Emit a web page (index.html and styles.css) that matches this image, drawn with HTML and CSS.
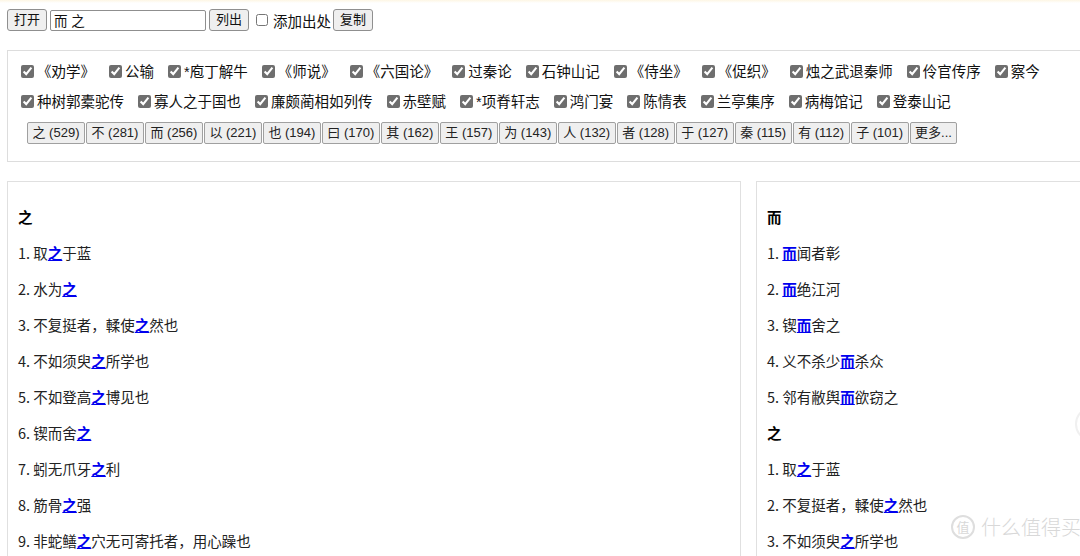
FILE: index.html
```html
<!DOCTYPE html>
<html lang="zh">
<head>
<meta charset="utf-8">
<title>文言虚词</title>
<link rel="stylesheet" href="styles.css">
</head>
<body>
<div class="toolbar">
  <button class="btn">打开</button>
  <input class="query" type="text" value="而 之">
  <button class="btn">列出</button>
  <label class="opt"><input type="checkbox"><span>添加出处</span></label>
  <button class="btn">复制</button>
</div>

<div class="sources">
  <div class="checks">
    <label class="chk"><input type="checkbox" checked>《劝学》</label>
    <label class="chk"><input type="checkbox" checked>公输</label>
    <label class="chk"><input type="checkbox" checked>*庖丁解牛</label>
    <label class="chk"><input type="checkbox" checked>《师说》</label>
    <label class="chk"><input type="checkbox" checked>《六国论》</label>
    <label class="chk"><input type="checkbox" checked>过秦论</label>
    <label class="chk"><input type="checkbox" checked>石钟山记</label>
    <label class="chk"><input type="checkbox" checked>《侍坐》</label>
    <label class="chk"><input type="checkbox" checked>《促织》</label>
    <label class="chk"><input type="checkbox" checked>烛之武退秦师</label>
    <label class="chk"><input type="checkbox" checked>伶官传序</label>
    <label class="chk"><input type="checkbox" checked>察今</label>
  </div>
  <div class="checks">
    <label class="chk"><input type="checkbox" checked>种树郭橐驼传</label>
    <label class="chk"><input type="checkbox" checked>寡人之于国也</label>
    <label class="chk"><input type="checkbox" checked>廉颇蔺相如列传</label>
    <label class="chk"><input type="checkbox" checked>赤壁赋</label>
    <label class="chk"><input type="checkbox" checked>*项脊轩志</label>
    <label class="chk"><input type="checkbox" checked>鸿门宴</label>
    <label class="chk"><input type="checkbox" checked>陈情表</label>
    <label class="chk"><input type="checkbox" checked>兰亭集序</label>
    <label class="chk"><input type="checkbox" checked>病梅馆记</label>
    <label class="chk"><input type="checkbox" checked>登泰山记</label>
  </div>
  <div class="words">
    <button class="word">之 (529)</button>
    <button class="word">不 (281)</button>
    <button class="word">而 (256)</button>
    <button class="word">以 (221)</button>
    <button class="word">也 (194)</button>
    <button class="word">曰 (170)</button>
    <button class="word">其 (162)</button>
    <button class="word">王 (157)</button>
    <button class="word">为 (143)</button>
    <button class="word">人 (132)</button>
    <button class="word">者 (128)</button>
    <button class="word">于 (127)</button>
    <button class="word">秦 (115)</button>
    <button class="word">有 (112)</button>
    <button class="word">子 (101)</button>
    <button class="word">更多...</button>
  </div>
</div>

<div class="results">
  <div class="panel">
    <p class="head">之</p>
    <p>1. 取<a href="#">之</a>于蓝</p>
    <p>2. 水为<a href="#">之</a></p>
    <p>3. 不复挺者，輮使<a href="#">之</a>然也</p>
    <p>4. 不如须臾<a href="#">之</a>所学也</p>
    <p>5. 不如登高<a href="#">之</a>博见也</p>
    <p>6. 锲而舍<a href="#">之</a></p>
    <p>7. 蚓无爪牙<a href="#">之</a>利</p>
    <p>8. 筋骨<a href="#">之</a>强</p>
    <p>9. 非蛇鳝<a href="#">之</a>穴无可寄托者，用心躁也</p>
  </div>
  <div class="panel">
    <p class="head">而</p>
    <p>1. <a href="#">而</a>闻者彰</p>
    <p>2. <a href="#">而</a>绝江河</p>
    <p>3. 锲<a href="#">而</a>舍之</p>
    <p>4. 义不杀少<a href="#">而</a>杀众</p>
    <p>5. 邻有敝舆<a href="#">而</a>欲窃之</p>
    <p class="head">之</p>
    <p>1. 取<a href="#">之</a>于蓝</p>
    <p>2. 不复挺者，輮使<a href="#">之</a>然也</p>
    <p>3. 不如须臾<a href="#">之</a>所学也</p>
  </div>
</div>

<div class="watermark"><span class="wm-logo">值</span><span class="wm-text">什么值得买</span></div>
<div class="edge-knob"></div>
</body>
</html>
```

FILE: styles.css
```css
html, body {
  height: 100%;
}
body {
  margin: 0;
  padding: 9px 0 0 7px;
  overflow: hidden;
  background: #fff;
  color: #111;
  font-family: "Liberation Sans", "Noto Sans CJK SC", sans-serif;
  font-size: 14.5px;
  position: relative;
  box-sizing: border-box;
  width: 1080px;
}
body::before {
  content: "";
  position: absolute;
  left: 0;
  top: 0;
  right: 0;
  height: 3px;
  background: linear-gradient(#fdf6e4, #fff);
}

.toolbar {
  display: flex;
  align-items: center;
  height: 22px;
}
.btn {
  height: 22px;
  padding: 0 6px;
  margin: 0 3px 0 0;
  font-family: "Liberation Sans", "Noto Sans CJK SC", sans-serif;
  font-size: 13px;
  color: #111;
  background: #efefef;
  border: 1px solid #8f8f8f;
  border-radius: 3px;
  line-height: 20px;
}
.query {
  box-sizing: border-box;
  width: 156px;
  height: 21px;
  margin: 0 3px 0 0;
  padding: 0 3px;
  border: 1px solid #8f8f8f;
  border-radius: 2px;
  font-family: "Liberation Sans", "Noto Sans CJK SC", sans-serif;
  font-size: 13.5px;
  color: #111;
}
.opt {
  display: flex;
  align-items: center;
  margin: 0 2px 0 0;
  white-space: nowrap;
}
.opt input {
  width: 12px;
  height: 12px;
  margin: 0 5px 0 4px;
}

.sources {
  margin-top: 19px;
  width: 1100px;
  height: 112px;
  box-sizing: border-box;
  border: 1px solid #ddd;
  padding: 10px 0 0 13px;
}
.checks {
  display: flex;
  column-gap: 14px;
  height: 21px;
  align-items: center;
}
.checks:first-child {
  margin-bottom: 9px;
}
.chk {
  display: flex;
  align-items: center;
  white-space: nowrap;
  line-height: 20px;
}
.chk input {
  width: 13px;
  height: 13px;
  margin: 0 3px 0 0;
  accent-color: #6e6e6e;
}
.words {
  display: flex;
  gap: 1px;
  margin: 10px 0 0 6px;
}
.word {
  height: 22px;
  padding: 0 4.5px;
  font-family: "Liberation Sans", "Noto Sans CJK SC", sans-serif;
  font-size: 13px;
  color: #222;
  background: #efefef;
  border: 1px solid #a0a0a0;
  border-radius: 2px;
  line-height: 20px;
  white-space: nowrap;
}

.results {
  display: flex;
  gap: 15px;
  margin-top: 19px;
}
.panel {
  flex: none;
  width: 734px;
  height: 400px;
  box-sizing: border-box;
  border: 1px solid #e0e0e0;
  padding: 10px 10px 0;
  font-family: "Noto Sans CJK SC", sans-serif;
}
.panel p {
  margin: 14px 0;
  line-height: 22px;
  font-size: 14.5px;
  color: #222;
}
.panel p.head {
  font-weight: bold;
  color: #000;
}
.panel a {
  color: #0000ee;
  font-weight: bold;
  text-decoration: underline;
}

.watermark {
  position: absolute;
  left: 951px;
  top: 514px;
  display: flex;
  align-items: center;
  gap: 6px;
  color: #d8d8d8;
  font-family: "Noto Sans CJK SC", sans-serif;
  white-space: nowrap;
}
.wm-logo {
  width: 20px;
  height: 20px;
  border: 2px solid #dedede;
  border-radius: 50%;
  font-size: 13px;
  line-height: 20px;
  text-align: center;
}
.wm-text {
  font-size: 20px;
  line-height: 26px;
  font-weight: 300;
}
.edge-knob {
  position: absolute;
  left: 1075px;
  top: 408px;
  width: 24px;
  height: 28px;
  border-radius: 50%;
  border: 2px solid #f0f0f0;
}
```
